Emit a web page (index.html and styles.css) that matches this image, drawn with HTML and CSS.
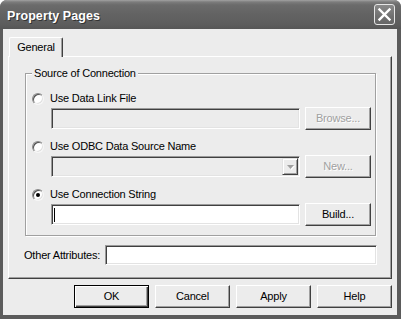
FILE: index.html
```html
<!DOCTYPE html>
<html>
<head>
<meta charset="utf-8">
<title>Property Pages</title>
<link rel="stylesheet" href="styles.css">
</head>
<body>
<div class="window">
  <div class="titlebar">
    <span class="title">Property Pages</span>
    <span class="close"><svg width="19" height="19" viewBox="0 0 19 19"><path d="M4.5 4.5L14.5 14.5M14.5 4.5L4.5 14.5" stroke="#fff" stroke-width="2.4" stroke-linecap="square" fill="none"/></svg></span>
  </div>
  <div class="client">
    <div class="tabstrip"><div class="tab">General</div></div>
    <div class="panel">
      <fieldset class="group">
        <legend>Source of Connection</legend>
        <div class="opt"><span class="radio"></span><span>Use Data Link File</span></div>
        <div class="ctl-row"><span class="edit disabled"></span><span class="btn disabled">Browse...</span></div>
        <div class="opt"><span class="radio"></span><span>Use ODBC Data Source Name</span></div>
        <div class="ctl-row"><span class="edit combo disabled"><span class="drop"><svg width="7" height="4" viewBox="0 0 7 4"><path d="M0 0H7L3.5 4Z" fill="#a0a0a0"/></svg></span></span><span class="btn disabled">New...</span></div>
        <div class="opt"><span class="radio checked"></span><span>Use Connection String</span></div>
        <div class="ctl-row"><span class="edit"><span class="caret"></span></span><span class="btn">Build...</span></div>
      </fieldset>
      <div class="attr-row"><span class="attr-label">Other Attributes:</span><span class="edit"></span></div>
    </div>
    <div class="buttons">
      <span class="btn default">OK</span>
      <span class="btn">Cancel</span>
      <span class="btn">Apply</span>
      <span class="btn">Help</span>
    </div>
  </div>
</div>
</body>
</html>
```

FILE: styles.css
```css
* { box-sizing: border-box; }
html, body { margin: 0; padding: 0; background: #fff; }
body {
  width: 401px;
  height: 319px;
  overflow: hidden;
  font-family: "Liberation Sans", Arial, sans-serif;
  font-size: 11px;
  line-height: 13px;
  letter-spacing: -0.2px;
  color: #000;
}
.window {
  width: 401px;
  height: 319px;
  display: flex;
  flex-direction: column;
  background: #5b5b5b;
  border-radius: 7px 7px 0 0;
  overflow: hidden;
}
.titlebar {
  height: 29px;
  flex: none;
  display: flex;
  align-items: flex-start;
  padding: 0 6px 0 7px;
  background: linear-gradient(to bottom, #a2a2a2 0px, #7c7c7c 2px, #6b6b6b 5px, #636363 14px, #5d5d5d 24px, #565656 29px);
}
.title {
  margin-top: 9px;
  font-weight: bold;
  font-size: 12.5px;
  line-height: 15px;
  letter-spacing: 0.1px;
  color: #fff;
  text-shadow: 1px 1px 0 #333;
}
.close {
  margin-left: auto;
  margin-top: 4px;
  width: 21px;
  height: 21px;
  border: 1px solid #e6e6e6;
  border-radius: 3px;
  background: linear-gradient(to bottom, #8a8a8a, #707070 60%, #666);
  display: flex;
  align-items: center;
  justify-content: center;
}
.client {
  flex: 1;
  margin: 0 4px 4px 3px;
  background: #ececec;
  padding: 8px 5px 0 5px;
}
.tabstrip {
  height: 19px;
  display: flex;
  align-items: flex-start;
}
.tab {
  position: relative;
  z-index: 1;
  margin-left: 1px;
  width: 54px;
  height: 20px;
  padding-top: 3px;
  text-align: center;
  background: #ececec;
  border-top: 1px solid #fff;
  border-left: 1px solid #fff;
  border-right: 1px solid #404040;
  border-radius: 2px 2px 0 0;
  box-shadow: inset -1px 0 0 #a0a0a0;
}
.panel {
  height: 223px;
  background: #ececec;
  border-top: 1px solid #fff;
  border-left: 1px solid #fff;
  border-right: 1px solid #404040;
  border-bottom: 1px solid #404040;
  box-shadow: inset -1px -1px 0 #a0a0a0;
  display: flex;
  flex-direction: column;
}
.group {
  margin: 10px 15px 0 16px;
  padding: 12px 4px 9px 6px;
  border: 1px solid #a0a0a0;
  box-shadow: inset 1px 1px 0 #fff, 1px 1px 0 #fff;
  min-width: 0;
}
.group legend {
  padding: 0 2px;
  background: #ececec;
  line-height: 13px;
}
.opt {
  display: flex;
  align-items: center;
  height: 13px;
  margin-bottom: 2px;
}
.radio {
  flex: none;
  width: 12px;
  height: 12px;
  margin-right: 6px;
  border-radius: 50%;
  background: #fff;
  border: 1px solid;
  border-color: #8a8a8a #f6f6f6 #f6f6f6 #8a8a8a;
  box-shadow: inset 1px 1px 0 #505050, inset -1px -1px 0 #e0e0e0;
  display: flex;
  align-items: center;
  justify-content: center;
}
.radio.checked::after {
  content: "";
  width: 4px;
  height: 4px;
  border-radius: 50%;
  background: #000;
}
.ctl-row {
  display: flex;
  align-items: center;
  gap: 5px;
  height: 23px;
  margin: 0 0 10px 19px;
}
.ctl-row:last-child { margin-bottom: 0; }
.edit {
  display: flex;
  align-items: center;
  height: 21px;
  background: #fff;
  border: 1px solid;
  border-color: #9a9a9a #fff #fff #9a9a9a;
  box-shadow: inset 1px 1px 0 #404040, inset -1px -1px 0 #e3e3e3;
}
.ctl-row .edit { flex: 1; }
.edit.disabled { background: #ececec; }
.edit.combo {
  justify-content: flex-end;
  padding: 1px;
}
.drop {
  width: 16px;
  height: 17px;
  background: #ececec;
  border: 1px solid;
  border-color: #e3e3e3 #404040 #404040 #e3e3e3;
  box-shadow: inset 1px 1px 0 #fff, inset -1px -1px 0 #a0a0a0;
  display: flex;
  align-items: center;
  justify-content: center;
}
.drop svg { filter: drop-shadow(1px 1px 0 #fff); }
.caret {
  width: 1px;
  height: 14px;
  margin-left: 2px;
  background: #000;
}
.btn {
  flex: none;
  width: 66px;
  height: 23px;
  line-height: 21px;
  text-align: center;
  background: #ececec;
  border: 1px solid;
  border-color: #fff #404040 #404040 #fff;
  box-shadow: inset -1px -1px 0 #a0a0a0;
}
.btn.disabled {
  color: #a0a0a0;
  text-shadow: 1px 1px 0 #fff;
}
.btn.default {
  border-color: #000;
  box-shadow: inset 1px 1px 0 #fff, inset -1px -1px 0 #404040, inset -2px -2px 0 #a0a0a0;
}
.attr-row {
  display: flex;
  align-items: center;
  margin: 9px 14px 0 15px;
}
.attr-label {
  flex: none;
  width: 81px;
}
.attr-row .edit {
  flex: 1;
  height: 20px;
}
.buttons {
  display: flex;
  justify-content: flex-end;
  gap: 6px;
  margin-top: 6px;
}
.buttons .btn { width: 75px; }
```
